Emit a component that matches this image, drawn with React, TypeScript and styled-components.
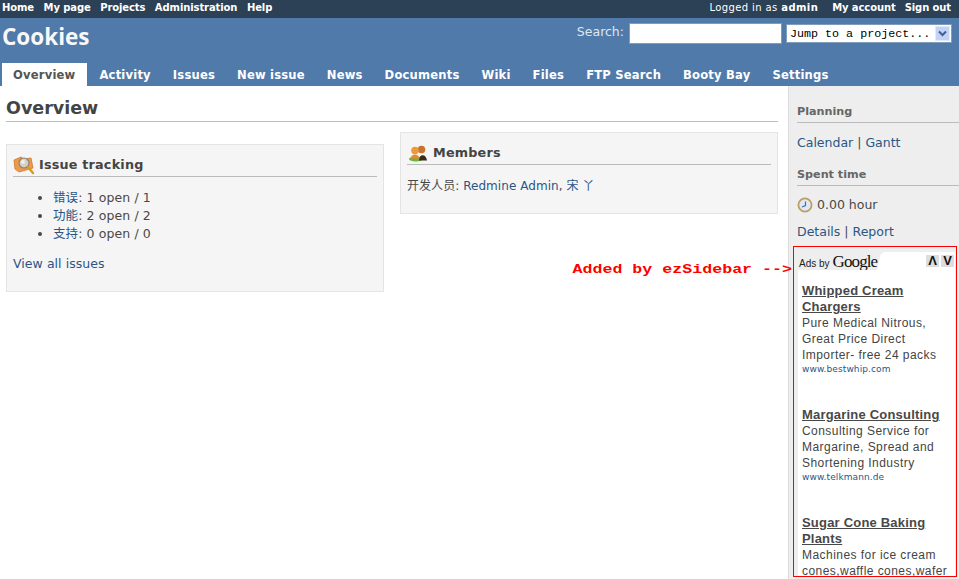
import styled, { createGlobalStyle } from 'styled-components';

const GlobalStyle = createGlobalStyle`
  html, body {
    margin: 0;
    padding: 0;
    height: 579px;
    overflow: hidden;
    background: #fff;
  }
`;

const TOP_LINKS = ['Home', 'My page', 'Projects', 'Administration', 'Help'];
const TABS = ['Overview', 'Activity', 'Issues', 'New issue', 'News', 'Documents', 'Wiki', 'Files', 'FTP Search', 'Booty Bay', 'Settings'];

const ADS = [
  {
    title: ['Whipped Cream', 'Chargers'],
    body: ['Pure Medical Nitrous,', 'Great Price Direct', 'Importer- free 24 packs'],
    url: 'www.bestwhip.com',
  },
  {
    title: ['Margarine Consulting'],
    body: ['Consulting Service for', 'Margarine, Spread and', 'Shortening Industry'],
    url: 'www.telkmann.de',
  },
  {
    title: ['Sugar Cone Baking', 'Plants'],
    body: ['Machines for ice cream', 'cones,waffle cones,wafer'],
    url: '',
  },
];

const IssueIcon = () =>
  <svg width="22" height="20" viewBox="0 0 22 20">
    <path d="M1 5 L8 2 L11 4 L18 3 L20 13 L6 17 L2 14 Z" fill="#ee9a4d" stroke="#d0772a" strokeWidth=".8" />
    <circle cx="11" cy="8" r="5" fill="#d8cfc4" stroke="#8b8276" strokeWidth="1.2" />
    <circle cx="10" cy="7" r="2" fill="#f3efe9" />
    <path d="M15 12 L20 18" stroke="#d99a1c" strokeWidth="2.4" strokeLinecap="round" />
  </svg>;

const MembersIcon = () =>
  <svg width="22" height="18" viewBox="0 0 22 18">
    <ellipse cx="9" cy="15" rx="7" ry="2.5" fill="#6cb33f" />
    <circle cx="14.5" cy="5.5" r="3.8" fill="#c9742a" />
    <path d="M12 16.5 C12 9.5 19 9.5 20 16.5 Z" fill="#3a2a1a" />
    <circle cx="8" cy="6.5" r="3.8" fill="#ee9a3c" />
    <path d="M3.5 14.5 C4.5 9 11.5 9 12.5 14.5 Z" fill="#e88a2c" />
  </svg>;

const ClockIcon = () =>
  <svg width="16" height="16" viewBox="0 0 16 16">
    <circle cx="8" cy="8" r="6.6" fill="#dfe9f5" stroke="#bd9f62" strokeWidth="1.8" />
    <path d="M8.5 4.5 V8.5 L5 10" fill="none" stroke="#4a6f9f" strokeWidth="1.2" />
  </svg>;

const App: React.FC = () =>
  <Page>
    <GlobalStyle />
    <TopMenu>
      <TopLinks>
        {TOP_LINKS.map(link => <TopLink key={link}>{link}</TopLink>)}
      </TopLinks>
      <Account>
        <LoggedAs>Logged in as <b>admin</b></LoggedAs>
        <TopLink>My account</TopLink>
        <TopLink>Sign out</TopLink>
      </Account>
    </TopMenu>

    <Header>
      <TitleRow>
        <Title>Cookies</Title>
        <SearchArea>
          <SearchLabel>Search:</SearchLabel>
          <SearchInput />
          <JumpSelect>
            <JumpText>Jump to a project...</JumpText>
            <JumpArrow>
              <svg width="9" height="7" viewBox="0 0 9 7">
                <path d="M1 1.5 L4.5 5 L8 1.5" fill="none" stroke="#3f5f94" strokeWidth="2" />
              </svg>
            </JumpArrow>
          </JumpSelect>
        </SearchArea>
      </TitleRow>
      <Tabs>
        {TABS.map((tab, i) => <Tab key={tab} $active={i === 0}>{tab}</Tab>)}
      </Tabs>
    </Header>

    <Main>
      <Content>
        <PageTitle>Overview</PageTitle>
        <Columns>
          <LeftColumn>
            <Box>
              <BoxTitle><IssueIcon />Issue tracking</BoxTitle>
              <IssueList>
                <li><Link>错误</Link>: 1 open / 1</li>
                <li><Link>功能</Link>: 2 open / 2</li>
                <li><Link>支持</Link>: 0 open / 0</li>
              </IssueList>
              <ViewAll><Link>View all issues</Link></ViewAll>
            </Box>
          </LeftColumn>
          <RightColumn>
            <MembersBox>
              <BoxTitle><MembersIcon />Members</BoxTitle>
              <MembersLine>开发人员: <Link>Redmine Admin</Link>, <Link>宋 丫</Link></MembersLine>
            </MembersBox>
            <AddedNote>Added by ezSidebar --&gt;</AddedNote>
          </RightColumn>
        </Columns>
      </Content>

      <Sidebar>
        <SideTitle>Planning</SideTitle>
        <SideText><Link>Calendar</Link> | <Link>Gantt</Link></SideText>
        <SpentTitle>Spent time</SpentTitle>
        <SpentLine><ClockIcon />0.00 hour</SpentLine>
        <DetailsLine><Link>Details</Link> | <Link>Report</Link></DetailsLine>
        <AdFrame>
          <AdPanel>
            <AdHeader>
              <AdBadge>Ads by <GoogleWord>Google</GoogleWord></AdBadge>
              <AdArrows>
                <AdArrow>Λ</AdArrow>
                <AdArrow>V</AdArrow>
              </AdArrows>
            </AdHeader>
            <AdList>
              {ADS.map(ad =>
                <Ad key={ad.title[0]}>
                  {ad.title.map(line => <AdTitle key={line}><u>{line}</u></AdTitle>)}
                  {ad.body.map(line => <div key={line}>{line}</div>)}
                  {ad.url && <AdUrl>{ad.url}</AdUrl>}
                </Ad>
              )}
            </AdList>
          </AdPanel>
        </AdFrame>
      </Sidebar>
    </Main>
  </Page>;


const Page = styled.div`
  width: 959px;
  height: 579px;
  overflow: hidden;
  display: flex;
  flex-direction: column;
  font-family: "DejaVu Sans", Verdana, sans-serif;
  font-size: 13px;
  color: #484848;
`;

const TopMenu = styled.div`
  display: flex;
  justify-content: space-between;
  align-items: center;
  height: 18px;
  padding: 0 8px 3px 2px;
  box-sizing: border-box;
  background: #2c4056;
  color: #fff;
  font-size: 10px;
`;

const TopLinks = styled.div`
  display: flex;
  gap: 9.5px;
`;

const TopLink = styled.span`
  font-weight: bold;
  letter-spacing: -.1px;
`;

const Account = styled.div`
  display: flex;
  gap: 9px;
`;

const LoggedAs = styled.span`
  margin-right: 5px;
  letter-spacing: .4px;
`;

const Header = styled.div`
  height: 68px;
  display: flex;
  flex-direction: column;
  justify-content: space-between;
  background: #507aaa;
  color: #f8f8f8;
`;

const TitleRow = styled.div`
  display: flex;
  justify-content: space-between;
  padding: 5px 7px 0 2px;
`;

const Title = styled.h1`
  margin: 0;
  font-family: "Open Sans", "DejaVu Sans", sans-serif;
  font-size: 22.5px;
  font-weight: 700;
  line-height: 27px;
`;

const SearchArea = styled.div`
  display: flex;
  align-items: flex-start;
  height: 22px;
`;

const SearchLabel = styled.span`
  margin-right: 5px;
  font-size: 12.5px;
  line-height: 18px;
  color: #dfe7f0;
`;

const SearchInput = styled.input`
  width: 153px;
  height: 21px;
  box-sizing: border-box;
  margin: 0 4px 0 0;
  padding: 0;
  border: 1px solid #7f9db9;
  background: #fff;
`;

const JumpSelect = styled.div`
  display: flex;
  align-items: center;
  justify-content: space-between;
  width: 166px;
  height: 19px;
  margin-top: 1px;
  box-sizing: border-box;
  border: 1px solid #7f9db9;
  background: #fff;
  padding-left: 3px;
`;

const JumpText = styled.span`
  font-family: "Liberation Mono", monospace;
  font-size: 11.7px;
  color: #000;
`;

const JumpArrow = styled.span`
  display: flex;
  align-items: center;
  justify-content: center;
  width: 15px;
  height: 15px;
  margin-right: 1px;
  background: #c3d3f5;
  border: 1px solid #e3eafc;
  box-sizing: border-box;
`;

const Tabs = styled.div`
  display: flex;
  padding-left: 2px;
`;

const Tab = styled.span<{ $active: boolean }>`
  height: 23px;
  padding: 0 ${props => props.$active ? '12px' : '10px'} 0 ${props => props.$active ? '11px' : '12px'};
  font-size: 11.55px;
  font-weight: bold;
  line-height: 25px;
  letter-spacing: .2px;
  color: ${props => props.$active ? '#555' : '#fff'};
  background: ${props => props.$active ? '#fff' : 'transparent'};
`;

const Main = styled.div`
  display: flex;
  flex: 1;
  min-height: 0;
`;

const Content = styled.div`
  width: 788px;
  flex: none;
  box-sizing: border-box;
  padding: 9px 10px 0 6px;
`;

const PageTitle = styled.h2`
  margin: 0;
  height: 26px;
  border-bottom: 1px solid #bbb;
  font-size: 17.5px;
  font-weight: bold;
  line-height: 27px;
  color: #444;
`;

const Columns = styled.div`
  display: flex;
  gap: 16px;
  margin-top: 10px;
`;

const LeftColumn = styled.div`
  width: 378px;
  padding-top: 12px;
`;

const RightColumn = styled.div`
  width: 378px;
`;

const Box = styled.div`
  height: 148px;
  box-sizing: border-box;
  border: 1px solid #e4e4e4;
  background: #f5f5f5;
  padding: 6px;
`;

const MembersBox = styled(Box)`
  height: 82px;
`;

const BoxTitle = styled.h3`
  display: flex;
  align-items: center;
  gap: 4px;
  height: 26px;
  box-sizing: border-box;
  padding-top: 2px;
  margin: 0;
  border-bottom: 1px solid #bbb;
  font-size: 12.75px;
  font-weight: bold;
  letter-spacing: .2px;
  color: #444;
`;

const Link = styled.a`
  color: #2a5685;
`;

const IssueList = styled.ul`
  margin: 0;
  padding: 12px 0 0 40px;
  font-size: 12.5px;
  line-height: 18px;
  letter-spacing: .1px;
  font-family: "DejaVu Sans", "Noto Sans CJK SC", sans-serif;
`;

const ViewAll = styled.div`
  margin-top: 12px;
  font-size: 12.5px;
  line-height: 18px;
  letter-spacing: .05px;
`;

const MembersLine = styled.div`
  margin-top: 12px;
  font-family: "DejaVu Sans", "Noto Sans CJK SC", sans-serif;
  font-size: 12px;
  line-height: 18px;
  letter-spacing: .05px;
`;

const AddedNote = styled.div`
  margin: 48px -14px 0 0;
  text-align: right;
  font-family: "Liberation Mono", monospace;
  font-size: 12.5px;
  font-weight: bold;
  line-height: 16px;
  color: #f00;
  white-space: nowrap;
  transform: scaleX(1.33);
  transform-origin: right center;
`;

const Sidebar = styled.div`
  flex: 1;
  min-width: 0;
  box-sizing: border-box;
  padding-top: 16px;
  background: #eee;
  border-left: 1px solid #ddd;
  font-size: 12.5px;
`;

const SideTitle = styled.h3`
  margin: 0 0 0 8px;
  height: 20px;
  border-bottom: 1px solid #bbb;
  font-size: 11.2px;
  font-weight: bold;
  line-height: 20px;
  color: #666;
`;

const SpentTitle = styled(SideTitle)`
  margin-top: 13px;
`;

const SideText = styled.div`
  margin: 11px 0 0 8px;
  line-height: 18px;
`;

const SpentLine = styled(SideText)`
  display: flex;
  align-items: center;
  gap: 4px;
  margin-top: 10px;
`;

const DetailsLine = styled(SideText)`
  margin-top: 9px;
`;

const AdFrame = styled.div`
  width: 164px;
  height: 331px;
  margin: 5px 0 0 4px;
  box-sizing: border-box;
  overflow: hidden;
  border: 1px solid #f00;
  background: #eee;
  padding: 5px 1px 0 4px;
  font-family: "Liberation Sans", Arial, sans-serif;
`;

const AdPanel = styled.div`
  height: 100%;
  background: #fff;
`;

const AdHeader = styled.div`
  display: flex;
  justify-content: space-between;
  height: 18px;
`;

const AdBadge = styled.div`
  display: flex;
  align-items: baseline;
  gap: 3px;
  width: 86px;
  height: 18px;
  padding-left: 1px;
  box-sizing: border-box;
  background: #eee;
  clip-path: polygon(0 0, 100% 0, 96% 15%, 92% 100%, 0 100%);
  font-size: 10px;
  color: #222;
  white-space: nowrap;
`;

const GoogleWord = styled.span`
  font-family: "Liberation Serif", serif;
  font-size: 17px;
  letter-spacing: -.9px;
  color: #111;
`;

const AdArrows = styled.div`
  display: flex;
  gap: 2px;
  margin: 3px 1px 0 0;
`;

const AdArrow = styled.span`
  width: 13px;
  height: 12px;
  background: #ddd;
  font-size: 13px;
  font-weight: bold;
  line-height: 12px;
  text-align: center;
  color: #111;
`;

const AdList = styled.div`
  padding: 13px 0 0 4px;
`;

const Ad = styled.div`
  margin-bottom: 31px;
  font-size: 12px;
  line-height: 16px;
  letter-spacing: .45px;
  color: #444;
  white-space: nowrap;
`;

const AdTitle = styled.div`
  font-size: 13px;
  font-weight: bold;
  letter-spacing: .2px;
  color: #484848;
`;

const AdUrl = styled.div`
  font-family: "DejaVu Sans", Verdana, sans-serif;
  font-size: 9px;
  line-height: 13px;
  letter-spacing: .1px;
  color: #2a5685;
`;

export default App;
